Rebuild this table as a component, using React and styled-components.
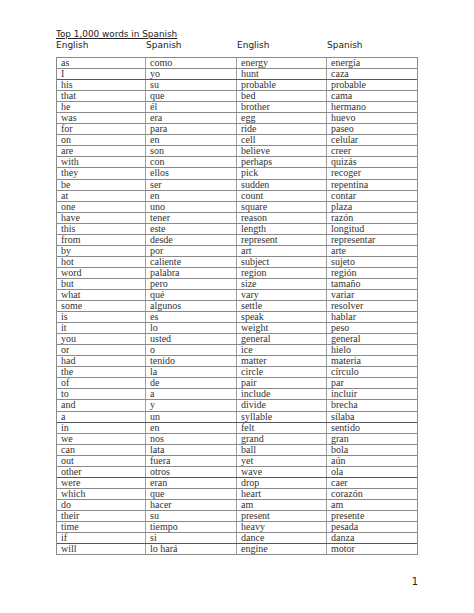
import React from 'react'
import styled, { createGlobalStyle } from 'styled-components'

const Global = createGlobalStyle`
body{
margin:0;
background:#fff;
}
`;

const Page = styled.div`
width:474px;
height:613px;
box-sizing:border-box;
padding:29px 0px 0px 56px;
font-family:"DejaVu Sans", "Liberation Sans", sans-serif;
color:#222;
`;

const Title = styled.div`
font-size:8.9px;
line-height:11px;
text-decoration:underline;
text-underline-offset:1px;
`;

const Columns = `
display:grid;
grid-template-columns:90px 91px 90px 91px;
width:362px;
`;

const HeaderRow = styled.div`
${Columns}
font-size:9px;
line-height:11px;
margin-bottom:6px;
`;

const Table = styled.div`
width:362px;
box-sizing:border-box;
border:1px solid #8a8a8a;
border-bottom-width:0;
font-family:"Liberation Serif", "DejaVu Serif", serif;
font-size:10px;
color:#333;
`;

const Row = styled.div`
display:grid;
width:360px;
grid-template-columns:89px 91px 90px 90px;
height:11.05px;
box-sizing:border-box;
border-bottom:${({$thick})=>$thick ? '1.5px solid #555' : '1px solid #8a8a8a'};
`;

const Cell = styled.div`
padding-left:4px;
line-height:10px;
white-space:nowrap;
overflow:hidden;
border-right:${({$last})=>$last ? 'none' : '1px solid #a0a0a0'};
`;

const Footer = styled.div`
width:362px;
display:flex;
justify-content:flex-end;
margin-top:21px;
font-size:10px;
`;

const left = [
  ['as','como'],['I','yo'],['his','su'],['that','que'],['he','él'],['was','era'],
  ['for','para'],['on','en'],['are','son'],['with','con'],['they','ellos'],['be','ser'],
  ['at','en'],['one','uno'],['have','tener'],['this','este'],['from','desde'],['by','por'],
  ['hot','caliente'],['word','palabra'],['but','pero'],['what','qué'],['some','algunos'],
  ['is','es'],['it','lo'],['you','usted'],['or','o'],['had','tenido'],['the','la'],
  ['of','de'],['to','a'],['and','y'],['a','un'],['in','en'],['we','nos'],['can','lata'],
  ['out','fuera'],['other','otros'],['were','eran'],['which','que'],['do','hacer'],
  ['their','su'],['time','tiempo'],['if','si'],['will','lo hará'],
];

const right = [
  ['energy','energía'],['hunt','caza'],['probable','probable'],['bed','cama'],
  ['brother','hermano'],['egg','huevo'],['ride','paseo'],['cell','celular'],
  ['believe','creer'],['perhaps','quizás'],['pick','recoger'],['sudden','repentina'],
  ['count','contar'],['square','plaza'],['reason','razón'],['length','longitud'],
  ['represent','representar'],['art','arte'],['subject','sujeto'],['region','región'],
  ['size','tamaño'],['vary','variar'],['settle','resolver'],['speak','hablar'],
  ['weight','peso'],['general','general'],['ice','hielo'],['matter','materia'],
  ['circle','círculo'],['pair','par'],['include','incluir'],['divide','brecha'],
  ['syllable','sílaba'],['felt','sentido'],['grand','gran'],['ball','bola'],['yet','aún'],
  ['wave','ola'],['drop','caer'],['heart','corazón'],['am','am'],['present','presente'],
  ['heavy','pesada'],['dance','danza'],['engine','motor'],
];

const thickRows = [1, 32, 37, 43];

const App = () => {
  return (
    <>
      <Global/>
      <Page>
        <Title>Top 1,000 words in Spanish</Title>
        <HeaderRow>
          <span>English</span>
          <span>Spanish</span>
          <span>English</span>
          <span>Spanish</span>
        </HeaderRow>
        <Table>
          {left.map((l, i) => (
            <Row key={i} $thick={thickRows.includes(i)}>
              <Cell>{l[0]}</Cell>
              <Cell>{l[1]}</Cell>
              <Cell>{right[i][0]}</Cell>
              <Cell $last>{right[i][1]}</Cell>
            </Row>
          ))}
        </Table>
        <Footer>1</Footer>
      </Page>
    </>
  )
}

export default App
